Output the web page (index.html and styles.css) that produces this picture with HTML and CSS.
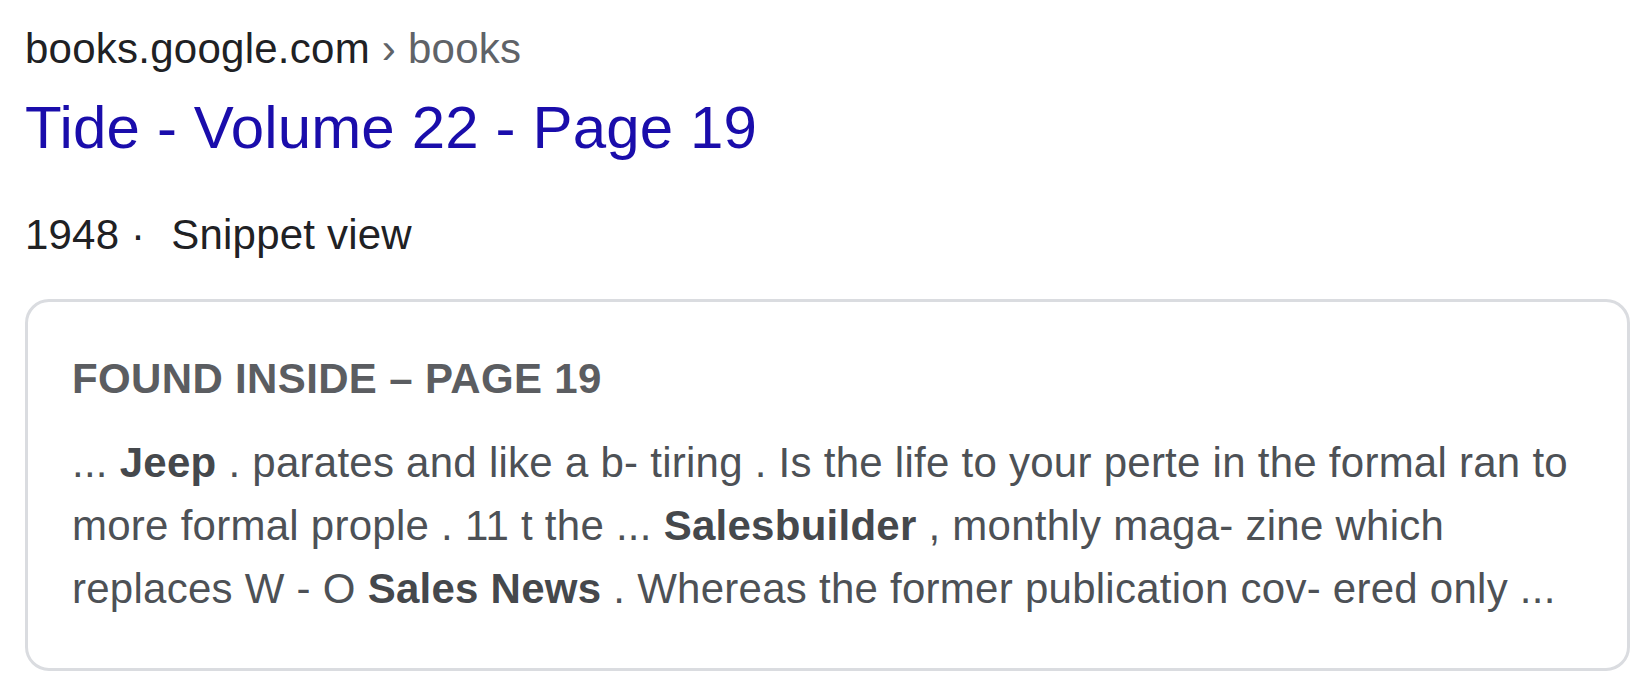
FILE: index.html
```html
<!DOCTYPE html>
<html lang="en">
<head>
<meta charset="utf-8">
<title>Tide - Volume 22 - Page 19</title>
<link rel="stylesheet" href="styles.css">
</head>
<body>
<div class="result">
  <div class="cite">books.google.com<span class="crumb"> › books</span></div>
  <h3 class="title">Tide - Volume 22 - Page 19</h3>
  <div class="meta">1948 ·<span class="meta-item">Snippet view</span></div>
  <div class="card">
    <div class="card-head">FOUND INSIDE – PAGE 19</div>
    <div class="card-body">... <b>Jeep</b> . parates and like a b- tiring . Is the life to your perte in the formal ran to more formal prople . 11 t the ... <b>Salesbuilder</b> , monthly maga- zine which replaces W - O <b>Sales News</b> . Whereas the former publication cov- ered only ...</div>
  </div>
</div>
</body>
</html>
```

FILE: styles.css
```css
html, body {
  margin: 0;
  padding: 0;
  background: #ffffff;
}

body {
  font-family: "Liberation Sans", Arial, Helvetica, sans-serif;
}

.result {
  padding: 19px 0 0 25px;
  width: 1605px;
}

.cite {
  font-size: 42px;
  line-height: 60px;
  letter-spacing: 0.25px;
  color: #202124;
  white-space: nowrap;
}

.crumb {
  color: #5f6368;
}

.title {
  margin: 10px 0 0 0;
  font-size: 60px;
  line-height: 78px;
  letter-spacing: 0.15px;
  font-weight: normal;
  color: #1a0dab;
}

.meta {
  margin-top: 38px;
  font-size: 42px;
  line-height: 60px;
  letter-spacing: 0.2px;
  color: #202124;
}

.meta-item {
  margin-left: 26px;
}

.card {
  box-sizing: border-box;
  margin-top: 34px;
  width: 1605px;
  border: 3px solid #dadce0;
  border-radius: 24px;
  padding: 47px 44px 48px 44px;
}

.card-head {
  font-size: 42px;
  line-height: 60px;
  letter-spacing: 0.35px;
  font-weight: bold;
  color: #5b5d61;
}

.card-body {
  margin-top: 22px;
  font-size: 42px;
  line-height: 63px;
  letter-spacing: 0.26px;
  color: #4d5156;
}

.card-body b {
  color: #45484c;
}
```
